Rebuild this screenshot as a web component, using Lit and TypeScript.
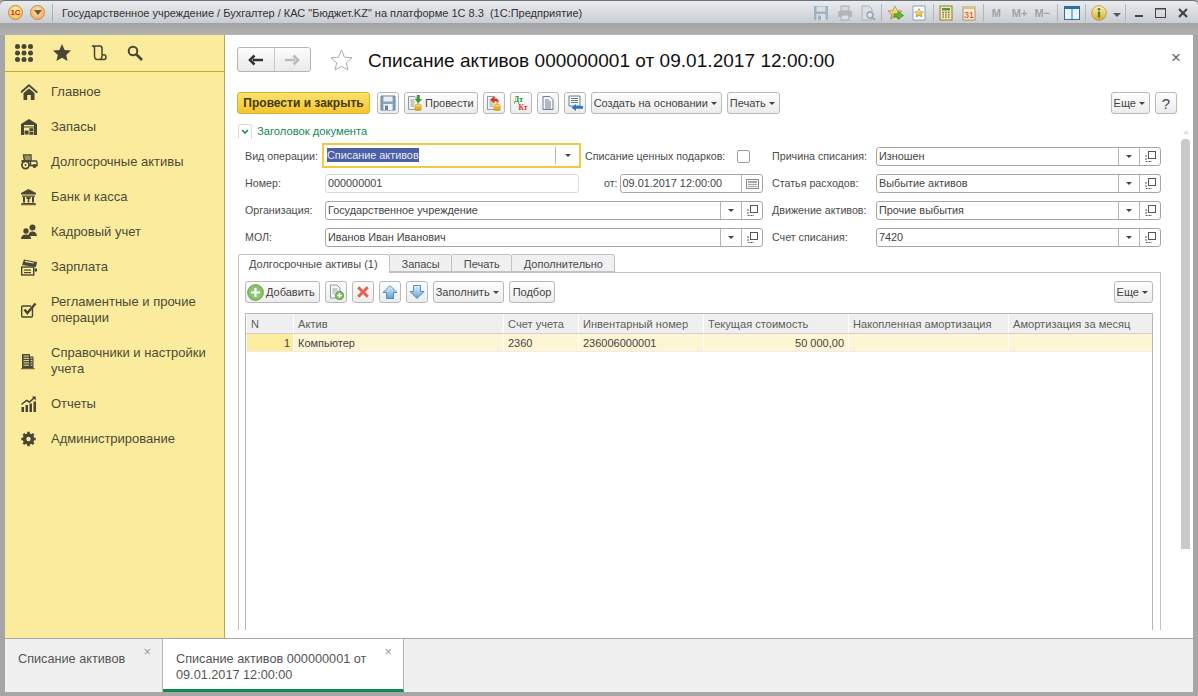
import { LitElement, html, css, svg } from 'lit';
import { customElement } from 'lit/decorators.js';

const DK = '#4a4635';

const ic = (w: number, h: number, body: unknown) => html`<svg width=${w} height=${h} viewBox="0 0 ${w} ${h}">${body}</svg>`;

const navIcons: Record<string, unknown> = {
  home: svg`<path d="M8 0 L17 8 L15.6 9.2 L8 2.6 L0.4 9.2 L-1 8Z" fill="${DK}"/><path d="M2.5 9 L8 4.4 L13.5 9 V16 H9.8 V11 H6.2 V16 H2.5Z" fill="${DK}"/>`,
  store: svg`<path d="M0 5 L8 0 L16 5 V16 H0Z" fill="${DK}"/><rect x="3" y="6" width="10" height="1.4" fill="#fbec9d"/><rect x="3" y="8.5" width="10" height="7.5" fill="#fbec9d"/><rect x="3.6" y="11.5" width="4" height="4" fill="${DK}"/><rect x="8.4" y="9.2" width="4" height="3" fill="${DK}"/><rect x="8.4" y="12.8" width="4" height="3" fill="${DK}"/>`,
  tractor: svg`<path d="M2.5 1 H10 V7 H15 Q16 7 16 8.500 V11.500 H9.500 V7 H3.500Z" fill="none" stroke="${DK}" stroke-width="1.400"/><rect x="3" y="2" width="6" height="4.500" fill="${DK}" opacity=".55"/><rect x="0.500" y="6" width="9.500" height="2" fill="${DK}"/><circle cx="4.500" cy="11" r="3.600" fill="none" stroke="${DK}" stroke-width="1.800"/><circle cx="4.500" cy="11" r="1" fill="${DK}"/><circle cx="13.500" cy="12" r="2" fill="${DK}"/>`,
  bank: svg`<path d="M7.500 0 L15 4 V5.500 H0 V4Z" fill="${DK}"/><rect x="1" y="6.500" width="13" height="1.300" fill="${DK}"/><rect x="2" y="8" width="2" height="5.500" fill="${DK}"/><rect x="11" y="8" width="2" height="5.500" fill="${DK}"/><path d="M5.500 8 H9.500 V10 H8.300 V13.500 H6.700 V10 H5.500Z" fill="${DK}"/><rect x="0.500" y="14" width="14" height="1" fill="${DK}"/><rect x="0" y="15.200" width="15" height="1" fill="${DK}"/>`,
  people: svg`<circle cx="11.500" cy="3.500" r="3" fill="${DK}"/><path d="M7.500 12 Q7.500 7.500 11.500 7.500 T16 12Z" fill="${DK}"/><circle cx="5" cy="7" r="2.700" fill="${DK}"/><path d="M0 15 Q0 10.500 5 10.500 T10 15Z" fill="${DK}"/>`,
  pay: svg`<path d="M1 6 L3 0.500 L16 3 L15 8 L8 7Z" fill="${DK}"/><rect x="4" y="2.500" width="9" height="1.200" fill="#fbec9d" transform="rotate(10 8 3)"/><rect x="0.700" y="8" width="12" height="8" fill="none" stroke="${DK}" stroke-width="1.400"/><rect x="3" y="10.500" width="7" height="1.200" fill="${DK}"/><rect x="3" y="13" width="7" height="1.200" fill="${DK}"/><rect x="13.500" y="9.500" width="2.500" height="3" fill="${DK}"/>`,
  check: svg`<path d="M11.500 6 V14 Q11.500 15 10.500 15 H1.700 Q0.700 15 0.700 14 V5 Q0.700 4 1.700 4 H10" fill="none" stroke="${DK}" stroke-width="1.400"/><path d="M3.500 7.500 L6.300 11 L14.500 1.500" fill="none" stroke="${DK}" stroke-width="2.400"/>`,
  book: svg`<path d="M1 1 H9 V3.500 H12.500 V15 H1Z" fill="${DK}"/><path d="M2.500 3 H8 M2.500 5.300 H8 M2.500 7.600 H8 M2.500 9.900 H8 M2.500 12.200 H8 M9.500 5.300 H11.500 M9.500 7.600 H11.500 M9.500 9.900 H11.500 M9.500 12.200 H11.500" stroke="#fbec9d" stroke-width="0.900"/><rect x="0" y="15.200" width="13.500" height="1" fill="${DK}"/>`,
  chart: svg`<rect x="0.500" y="11" width="2.500" height="5" fill="${DK}"/><rect x="4.500" y="9" width="2.500" height="7" fill="${DK}"/><rect x="8.500" y="7.500" width="2.500" height="8.500" fill="${DK}"/><rect x="12.500" y="5.500" width="2.500" height="10.500" fill="${DK}"/><path d="M0.500 8.500 L5.500 4.500 L8.500 6 L13.500 1.500" fill="none" stroke="${DK}" stroke-width="1.600"/><path d="M10.800 0.500 H14.800 V4.500Z" fill="${DK}"/>`,
  gear: svg`<circle cx="7.500" cy="8" r="4.300" fill="none" stroke="${DK}" stroke-width="3"/><path d="M7.500 0.800 V15.200 M0.300 8 H14.700 M2.400 2.900 L12.600 13.100 M12.600 2.900 L2.400 13.100" stroke="${DK}" stroke-width="2.600"/><circle cx="7.500" cy="8" r="2.200" fill="#fbec9d"/>`,
};

const grad = svg`<defs>
  <linearGradient id="gold" x1="0" y1="0" x2="0" y2="1"><stop offset="0" stop-color="#fff3b8"/><stop offset="1" stop-color="#e0a92a"/></linearGradient>
  <linearGradient id="sky" x1="0" y1="0" x2="0" y2="1"><stop offset="0" stop-color="#e3f2fc"/><stop offset="1" stop-color="#5e9fd8"/></linearGradient>
</defs>`;

const coins = svg`<ellipse cx="11" cy="14.300" rx="3.700" ry="1.500" fill="#d69a1c"/><ellipse cx="11" cy="12.500" rx="3.700" ry="1.500" fill="#e6b22e"/><ellipse cx="11" cy="10.700" rx="3.700" ry="1.500" fill="#f6d45a" stroke="#c8921c" stroke-width=".5"/>`;
const doc = svg`<path d="M1.500 1.500 H8 L11 4.500 V14.500 H1.500Z" fill="#f6f3e6" stroke="#8d9aa8"/><path d="M3.500 5 H7 M3.500 7 H8 M3.500 9 H7 M3.500 11 H7" stroke="#7b8b9b" stroke-width=".8"/>`;

const toolIcons: Record<string, unknown> = {
  save: svg`<path d="M1 1 H15 V15 H1Z" fill="#8aa3b8" stroke="#6b8196"/><rect x="3.500" y="1.500" width="9" height="5" fill="#e9eef3"/><rect x="3.500" y="9" width="9" height="6" fill="#eef2f5"/><rect x="5" y="10.500" width="3" height="4.500" fill="#6a829a"/>`,
  post: svg`${doc}${coins}<path d="M9.800 0 H12.800 V4 H15 L11.300 8.200 L7.600 4 H9.800Z" fill="#3f9c35"/>`,
  unpost: svg`${doc}${coins}<path d="M13 7.500 Q13 3.500 8.500 3.500 V1 L4 4.800 L8.500 8.500 V6 Q11 6 13 7.500Z" fill="#d23a28"/>`,
  dtkt: svg`<text x="1" y="6.500" font-size="7.500" font-weight="700" font-family="Liberation Serif, serif" fill="#2b8a2b">Дт</text><text x="5.500" y="15" font-size="7.500" font-weight="700" font-family="Liberation Serif, serif" fill="#d33020">Кт</text>`,
  report: svg`<path d="M3 1.500 H10 L13 4.500 V14.500 H3Z" fill="#f3f7fb" stroke="#6b7f93"/><path d="M5 5 H9 M5 7 H11 M5 9 H11 M5 11 H11 M5 13 H11" stroke="#5a6e82" stroke-width=".9"/>`,
  struct: svg`<path d="M2 1 H13 V11 H2Z" fill="#f3f7fb" stroke="#6b7f93"/><path d="M4 3.500 H11 M4 5.500 H11 M4 7.500 H11" stroke="#5a6e82" stroke-width=".9"/><path d="M16 11 H9 V9 L4.500 12.500 L9 16 V13.800 H16Z" fill="#2b78bf"/>`,
  addDoc: svg`<path d="M2.500 1 H9 L12 4 V14 H2.500Z" fill="#f3f7fb" stroke="#8d9aa8"/><path d="M4.500 5 H9.500 M4.500 7 H9.500 M4.500 9 H7" stroke="#7b8b9b" stroke-width=".8"/><circle cx="11.500" cy="11.500" r="4.300" fill="#79b85a" stroke="#4f8f3a" stroke-width=".6"/><path d="M11.500 9 V14 M9 11.500 H14" stroke="#fff" stroke-width="1.500"/>`,
  del: svg`<path d="M3.200 3.200 L12.800 12.800 M12.800 3.200 L3.200 12.800" stroke="#e8614c" stroke-width="3"/>`,
  up: svg`${grad}<path d="M8 1.500 L15 8.500 H11.500 V14.500 H4.500 V8.500 H1Z" fill="url(#sky)" stroke="#3a78b0" stroke-width=".8"/>`,
  down: svg`${grad}<path d="M8 14.500 L15 7.500 H11.500 V1.500 H4.500 V7.500 H1Z" fill="url(#sky)" stroke="#3a78b0" stroke-width=".8"/>`,
};

// title bar strip: [left margin, item], margins come from the measured icon positions
const sep = html`<span class="tb-sep"></span>`;
const mem = (t: string) => html`<span class="mem">${t}</span>`;
const titleItems: [number, unknown][] = [
  [0, ic(16, 16, svg`<path d="M1 1 H15 V15 H1Z" fill="#9db3c4"/><rect x="3.500" y="1.500" width="9" height="5" fill="#d8e0e6"/><rect x="3.500" y="9" width="9" height="6" fill="#d8e0e6"/><rect x="5" y="10.500" width="3" height="4.500" fill="#9db3c4"/>`)],
  [8, ic(16, 16, svg`<rect x="4" y="1" width="8" height="5" fill="#d6d8da" stroke="#a8acb0"/><rect x="1" y="6" width="14" height="6" rx="1" fill="#b2b6ba"/><rect x="4" y="10" width="8" height="5" fill="#dcdee0" stroke="#a8acb0"/>`)],
  [7, ic(16, 16, svg`<path d="M2 1 H9 L12 4 V15 H2Z" fill="#d9dee2" stroke="#a9b2ba"/><circle cx="10" cy="10" r="3" fill="#dbe3ea" stroke="#95a3ae" stroke-width="1.300"/><path d="M12 12 L15 15" stroke="#95a3ae" stroke-width="1.500"/>`)],
  [5, sep],
  [6, ic(16, 16, svg`${grad}<path d="M7 1 L9 5.500 L14 6 L10.300 9.300 L11.300 14 L7 11.600 L2.700 14 L3.700 9.300 L0 6 L5 5.500Z" fill="url(#gold)" stroke="#9b8a3a" stroke-width=".7"/><path d="M6 9 H10 V6.500 L15.500 10.500 L10 14.500 V12 H6Z" fill="#5cb82e" stroke="#2f7d1a" stroke-width=".6"/>`)],
  [8, ic(14, 16, svg`${grad}<path d="M1 1 H13 V15 H1Z" fill="#fff" stroke="#8aa0b5"/><path d="M7 3.500 L8.500 6.500 L11.500 7 L9.300 9 L9.900 12 L7 10.500 L4.100 12 L4.700 9 L2.500 7 L5.500 6.500Z" fill="url(#gold)" stroke="#9b8a3a" stroke-width=".6"/>`)],
  [7, sep],
  [5, ic(14, 16, svg`<rect x="1" y="1" width="12" height="14" fill="#f3e7b0" stroke="#8c7f3c"/><rect x="3" y="3" width="8" height="2.500" fill="#4f9a44"/><path d="M3.500 7.500 H4.800 M6.300 7.500 H7.600 M9.100 7.500 H10.400 M3.500 9.800 H4.800 M6.300 9.800 H7.600 M9.100 9.800 H10.400 M3.500 12.100 H4.800 M6.300 12.100 H7.600 M9.100 12.100 H10.400" stroke="#5a5430" stroke-width="1.300"/>`)],
  [9, ic(14, 16, svg`<rect x="1" y="2" width="12" height="13" fill="#f7ecd0" stroke="#a79464"/><rect x="1" y="1" width="12" height="3" fill="#d9c28a"/><text x="7" y="13" text-anchor="middle" font-size="9" font-family="Liberation Sans, sans-serif" fill="#cf3a20">31</text>`)],
  [7, sep],
  [8, mem('M')],
  [11, mem('M+')],
  [7, mem('M−')],
  [7, sep],
  [6, ic(16, 14, svg`<rect x=".5" y=".5" width="15" height="13" fill="#eaf2fa" stroke="#2e6f9f"/><rect x="1" y="1" width="14" height="2" fill="#2e6f9f"/><path d="M8 2 V13" stroke="#2e6f9f"/>`)],
  [5, sep],
  [5, ic(16, 16, svg`${grad}<circle cx="8" cy="8" r="7.300" fill="url(#gold)" stroke="#b08a30" stroke-width=".7"/><circle cx="8" cy="4.300" r="1.300" fill="#3f8a2c"/><rect x="6.900" y="6.500" width="2.200" height="6" fill="#3f8a2c"/>`)],
  [6, html`<span class="tb-caret"></span>`],
  [4, sep],
  [9, ic(9, 12, svg`<rect x="0" y="8" width="8" height="2" fill="#444"/>`)],
  [11, ic(12, 12, svg`<rect x=".5" y="1.500" width="10" height="9" fill="none" stroke="#444"/><rect x=".5" y="1" width="10" height="1.500" fill="#444"/>`)],
  [11, ic(10, 10, svg`<path d="M1 1 L9 9 M9 1 L1 9" stroke="#444" stroke-width="2.200"/>`)],
];

const dropIcon = html`<span class="fbtn"><span class="tri"></span></span>`;
const openIcon = html`<span class="fbtn">${ic(11, 11, svg`<rect x="3.500" y=".5" width="7" height="7" fill="none" stroke="#555"/><path d="M1 4 V10.500 H7" fill="none" stroke="#555" stroke-dasharray="2 1"/>`)}</span>`;
const calIcon = html`<span class="fbtn">${ic(13, 10, svg`<rect x=".5" y=".5" width="12" height="9" fill="#f6f6f6" stroke="#8a8a8a"/><path d="M2 3 H11" stroke="#555"/><path d="M2.500 5.500 H11 M2.500 7.500 H11" stroke="#555" stroke-dasharray="1 1"/>`)}</span>`;

const navItems = [
  ['home', 'Главное'],
  ['store', 'Запасы'],
  ['tractor', 'Долгосрочные активы'],
  ['bank', 'Банк и касса'],
  ['people', 'Кадровый учет'],
  ['pay', 'Зарплата'],
  ['check', 'Регламентные и прочие операции'],
  ['book', 'Справочники и настройки учета'],
  ['chart', 'Отчеты'],
  ['gear', 'Администрирование'],
];

const rightFields = [
  ['Причина списания:', 'Изношен'],
  ['Статья расходов:', 'Выбытие активов'],
  ['Движение активов:', 'Прочие выбытия'],
  ['Счет списания:', '7420'],
];

const columns = [
  ['N', 47], ['Актив', 210], ['Счет учета', 75], ['Инвентарный номер', 125],
  ['Текущая стоимость', 145], ['Накопленная амортизация', 160], ['Амортизация за месяц', 144],
] as [string, number][];

const rowCells = ['1', 'Компьютер', '2360', '236006000001', '50 000,00', '', ''];

@customElement('app-root')
export class AppRoot extends LitElement {
  private _field(value: string, ...buttons: unknown[]) {
    return html`<div class="field"><span class="fval">${value}</span>${buttons}</div>`;
  }

  private _tool(name: string, label = '') {
    return html`<button class="btn tool ${label ? '' : 'square'}">${ic(16, 16, toolIcons[name])}${label}</button>`;
  }

  private _menu(label: string) {
    return html`<button class="btn menu">${label}<span class="tri"></span></button>`;
  }

  render() {
    return html`
      <div class="titlebar">
        <span class="orb logo">1С</span>
        <span class="orb"><span class="orb-tri"></span></span>
        <span class="title-sep"></span>
        <span class="title-text">Государственное учреждение / Бухгалтер / КАС "Бюджет.KZ" на платформе 1С 8.3  (1С:Предприятие)</span>
        <div class="tb-icons">
          ${titleItems.map(([m, item]) => html`<span class="tb" style="margin-left:${m}px">${item}</span>`)}
        </div>
      </div>
      <div class="strip"></div>
      <div class="body">
        <aside class="side">
          <div class="side-top">
            ${ic(18, 18, svg`${[2.500, 9, 15.500].flatMap((y) => [2.500, 9, 15.500].map((x) => svg`<circle cx=${x} cy=${y} r="2.500" fill="${DK}"/>`))}`)}
            ${ic(18, 17, svg`<path d="M9 0 L11.600 6 L18 6.600 L13.200 10.900 L14.600 17 L9 13.800 L3.400 17 L4.800 10.900 L0 6.600 L6.400 6Z" fill="${DK}"/>`)}
            ${ic(16, 16, svg`<path d="M3.500 3 V1 H0.800 Q3.500 1 3.500 3 V11 Q3.500 14.500 6.500 14.500 H13 Q15 14.500 15 12 Q15 9.800 12.800 9.800 Q10.800 9.800 10.800 12 Q10.800 14.500 8.500 14.500 M3.500 1 H9 Q11 1 11 3.500 V9.800" fill="none" stroke="${DK}" stroke-width="1.500"/>`)}
            ${ic(16, 16, svg`<circle cx="6" cy="6" r="4.300" fill="none" stroke="${DK}" stroke-width="2"/><path d="M9.500 9.500 L15 15" stroke="${DK}" stroke-width="2.600"/>`)}
          </div>
          <nav class="nav">
            ${navItems.map(([icon, label]) => html`
              <div class="nav-item">
                <span class="nav-icon">${ic(17, 17, navIcons[icon])}</span>
                <span class="nav-label">${label}</span>
              </div>`)}
          </nav>
        </aside>
        <main class="content">
          <header class="head">
            <div class="navbtns">
              <span class="nb">${ic(16, 12, svg`<path d="M15 6 H5 M6.500 1.500 L2 6 L6.500 10.500" fill="none" stroke="#333" stroke-width="2.600"/>`)}</span>
              <span class="nb">${ic(16, 12, svg`<path d="M1 6 H11 M9.500 1.500 L14 6 L9.500 10.500" fill="none" stroke="#b9bcbf" stroke-width="2.600"/>`)}</span>
            </div>
            ${ic(23, 22, svg`<path d="M11.500 1 L14.500 8.200 L22 8.800 L16.300 13.800 L18 21 L11.500 17.200 L5 21 L6.700 13.800 L1 8.800 L8.500 8.200Z" fill="#fff" stroke="#a9adb2"/>`)}
            <h1 class="doc-title">Списание активов 000000001 от 09.01.2017 12:00:00</h1>
            <span class="close">×</span>
          </header>

          <div class="toolbar">
            <button class="btn primary">Провести и закрыть</button>
            ${this._tool('save')}
            ${this._tool('post', 'Провести')}
            ${this._tool('unpost')}
            ${this._tool('dtkt')}
            ${this._tool('report')}
            ${this._tool('struct')}
            ${this._menu('Создать на основании')}
            ${this._menu('Печать')}
            <span class="grow"></span>
            ${this._menu('Еще')}
            <button class="btn square help">?</button>
          </div>

          <div class="scroller">
            <div class="group-head">
              <span class="chev">${ic(8, 6, svg`<path d="M1 1 L4 4 L7 1" fill="none" stroke="#0e8a4f" stroke-width="1.500"/>`)}</span>
              <span>Заголовок документа</span>
            </div>

            <div class="form">
              <div class="fcol left">
                <div class="frow">
                  <label class="lbl">Вид операции:</label>
                  <div class="field focus"><span class="fval"><span class="sel">Списание активов</span></span><span class="vbar"></span><span class="fbtn bare"><span class="tri"></span></span></div>
                  <label class="lbl gift">Списание ценных подарков:</label>
                  <span class="checkbox"></span>
                </div>
                <div class="frow">
                  <label class="lbl">Номер:</label>
                  <div class="field number"><span class="fval">000000001</span></div>
                  <label class="lbl from">от:</label>
                  ${this._field('09.01.2017 12:00:00', calIcon)}
                </div>
                <div class="frow">
                  <label class="lbl">Организация:</label>
                  ${this._field('Государственное учреждение', dropIcon, openIcon)}
                </div>
                <div class="frow">
                  <label class="lbl">МОЛ:</label>
                  ${this._field('Иванов Иван Иванович', dropIcon, openIcon)}
                </div>
              </div>
              <div class="fcol right">
                ${rightFields.map(([label, value]) => html`
                  <div class="frow">
                    <label class="lbl">${label}</label>
                    ${this._field(value, dropIcon, openIcon)}
                  </div>`)}
              </div>
            </div>

            <div class="tabs">
              <span class="tab active">Долгосрочные активы (1)</span>
              <span class="tab">Запасы</span>
              <span class="tab">Печать</span>
              <span class="tab">Дополнительно</span>
            </div>
            <div class="panel">
              <div class="toolbar inner">
                <button class="btn add">${ic(17, 17, svg`<circle cx="8.500" cy="8.500" r="7.800" fill="#8cc46c" stroke="#5d9a48"/><path d="M8.500 4 V13 M4 8.500 H13" stroke="#fff" stroke-width="2.200"/>`)}Добавить</button>
                ${this._tool('addDoc')}
                ${this._tool('del')}
                ${this._tool('up')}
                ${this._tool('down')}
                ${this._menu('Заполнить')}
                <button class="btn">Подбор</button>
                <span class="grow"></span>
                ${this._menu('Еще')}
              </div>
              <div class="table">
                <div class="tr thead">
                  ${columns.map(([name, w]) => html`<span class="th" style="width:${w}px">${name}</span>`)}
                </div>
                <div class="tr tsel">
                  ${columns.map(([, w], i) => html`<span class="td ${i === 0 ? 'num' : ''} ${i === 4 ? 'money' : ''}" style="width:${w}px">${rowCells[i]}</span>`)}
                </div>
              </div>
            </div>
          </div>
          <div class="scrollbar"><span class="arrow"></span><span class="thumb"></span></div>
        </main>
      </div>
      <footer class="bottom">
        <div class="wtab first">
          <span>Списание активов</span><span class="x">×</span>
        </div>
        <div class="wtab current">
          <span>Списание активов 000000001 от 09.01.2017 12:00:00</span><span class="x">×</span>
        </div>
      </footer>
    `;
  }

  static styles = css`
    :host {
      display: flex;
      flex-direction: column;
      width: 1198px;
      height: 696px;
      overflow: hidden;
      background: #a6a6a6;
      font-family: "Liberation Sans", Arial, sans-serif;
      font-size: 11px;
      color: #4a4a4a;
    }
    button { font: inherit; color: inherit; }
    svg { display: block; flex: none; }

    .titlebar {
      height: 23px;
      flex: none;
      display: flex;
      align-items: center;
      padding: 1px 0 0 8px;
      box-sizing: border-box;
      background: linear-gradient(#e9ecef, #c9cdd1);
      border-top: 1px solid #6f7274;
      border-radius: 5px 5px 0 0;
    }
    .orb {
      width: 15px;
      height: 15px;
      border-radius: 50%;
      margin-right: 7px;
      background: radial-gradient(circle at 50% 35%, #fbe3b4, #e9a356);
      border: 1px solid #c78a42;
      box-sizing: border-box;
      display: flex;
      align-items: center;
      justify-content: center;
    }
    .logo {
      background: radial-gradient(circle at 50% 35%, #fff2a8, #f0b93a);
      color: #d4281c;
      font-size: 8px;
      font-weight: 700;
    }
    .orb-tri {
      border: 4px solid transparent;
      border-top: 5px solid #6d5a3c;
      border-bottom: 0;
    }
    .title-sep { width: 1px; height: 18px; background: #aeb1b4; margin-right: 9px; }
    .title-text { white-space: pre; color: #333; font-size: 11px; flex: 1; }
    .tb-icons { display: flex; align-items: center; padding-right: 10px; }
    .tb { display: flex; align-items: center; }
    .tb-sep { display: block; width: 1px; height: 18px; background: #b3b6b9; }
    .mem { color: #a3a3a3; font-weight: 700; font-size: 11px; }
    .tb-caret { display: block; border: 4px solid transparent; border-top: 4px solid #555; border-bottom: 0; margin-top: 4px; }

    .strip { height: 12px; flex: none; background: linear-gradient(#a2a2a2, #b2b2b2); }

    .body { flex: 1; min-height: 0; display: flex; margin: 0 5px; }
    .side {
      width: 219px;
      flex: none;
      background: #fbec9d;
      border-right: 1px solid #b9a85a;
      display: flex;
      flex-direction: column;
    }
    .side-top {
      height: 37px;
      flex: none;
      box-sizing: border-box;
      border-bottom: 1px solid #c6a935;
      display: flex;
      align-items: center;
      gap: 20px;
      padding: 0 0 1px 10px;
    }
    .nav { padding: 12px 0 0 16px; display: flex; flex-direction: column; gap: 19px; }
    .nav-item { display: flex; align-items: center; }
    .nav-icon { width: 30px; height: 16px; flex: none; }
    .nav-label {
      line-height: 16px;
      font-size: 13px;
      color: #4c4a38;
      width: 165px;
    }

    .content {
      position: relative;
      flex: 1;
      min-width: 0;
      background: #fff;
      display: flex;
      flex-direction: column;
      padding-left: 12px;
    }
    .head { display: flex; align-items: center; height: 25px; margin-top: 12px; flex: none; }
    .navbtns {
      display: flex;
      width: 74px;
      height: 25px;
      box-sizing: border-box;
      border: 1px solid #b5b5b5;
      border-radius: 3px;
      background: linear-gradient(#fdfdfd, #e9e9e9);
      margin-right: 19px;
    }
    .nb { flex: 1; display: flex; align-items: center; justify-content: center; }
    .nb + .nb { border-left: 1px solid #c8c8c8; }
    .doc-title {
      font-size: 19px;
      line-height: 25px;
      padding-top: 1px;
      font-weight: 400;
      color: #111;
      margin: 0 0 0 15px;
      letter-spacing: .04px;
      flex: 1;
    }
    .close { color: #666; font-size: 17px; margin: -4px 12px 0 0; }

    .toolbar { display: flex; align-items: center; gap: 5px; height: 22px; margin-top: 20px; padding-right: 16px; flex: none; }
    .grow { flex: 1; }
    .btn {
      height: 22px;
      box-sizing: border-box;
      padding: 0 3px;
      border: 1px solid #b9b9b9;
      border-radius: 3px;
      background: linear-gradient(#fdfdfd, #ececec);
      display: inline-flex;
      align-items: center;
      gap: 3px;
      white-space: nowrap;
      color: #444;
      font-size: 11px;
    }
    .tool { gap: 2px; padding: 0 3px 0 2px; }
    .menu { padding: 0 4px 0 2px; }
    .square { width: 22px; justify-content: center; padding: 0; }
    .primary {
      width: 133px;
      justify-content: center;
      font-size: 12px;
      font-weight: 700;
      color: #443a10;
      border-color: #d9b231;
      background: linear-gradient(#fde36f, #f4c42e);
      margin-right: 2px;
    }
    .help { font-size: 15px; }
    .tri {
      display: inline-block;
      border: 3px solid transparent;
      border-top: 3px solid #444;
      border-bottom: 0;
    }

    .scroller {
      flex: 1;
      min-height: 0;
      overflow: hidden;
      margin-top: 6px;
      margin-bottom: 8px;
    }
    .group-head {
      display: flex;
      align-items: flex-start;
      height: 23px;
      box-sizing: border-box;
      padding-top: 4px;
      line-height: 15px;
      color: #0f8a55;
      font-size: 11.200px;
      gap: 5px;
      margin-left: 1px;
    }
    .chev {
      width: 14px;
      height: 15px;
      box-sizing: border-box;
      border: 1px solid #dcdcdc;
      border-bottom: 0;
      border-radius: 3px 3px 0 0;
      display: flex;
      align-items: center;
      justify-content: center;
    }

    .form { display: flex; gap: 9px; margin-left: 8px; width: 916px; }
    .fcol { display: flex; flex-direction: column; }
    .left { width: 518px; flex: none; }
    .right { flex: 1; min-width: 0; }
    .frow { height: 27px; display: flex; align-items: center; }
    .lbl { white-space: nowrap; font-size: 10.700px; color: #4c4c4c; flex: none; margin-top: -1px; }
    .left .lbl:first-child { width: 80px; }
    .right .lbl:first-child { width: 104px; }
    .gift { margin-left: 4px; }
    .from { margin-left: 25px; margin-right: 2px; }
    .field {
      flex: 1;
      min-width: 0;
      height: 19px;
      box-sizing: border-box;
      border: 1px solid #a6a6a6;
      border-radius: 3px;
      display: flex;
      align-items: stretch;
      background: #fff;
    }
    .fval { flex: 1; min-width: 0; padding: 0 2px; line-height: 17px; white-space: nowrap; color: #444; font-size: 10.850px; }
    .fbtn {
      width: 20px;
      flex: none;
      border-left: 1px solid #b5b5b5;
      display: flex;
      align-items: center;
      justify-content: center;
    }
    .bare { border-left: 0; width: 23px; }
    .vbar { width: 1px; height: 17px; align-self: center; background: #b5b5b5; }
    .focus {
      flex: none;
      width: 259px;
      height: 25px;
      margin: -2px 0 0 -3px;
      border: 2px solid #f1cb3f;
      border-radius: 0;
    }
    .focus .fval { padding: 2px 3px 0; }
    .sel { background: #4c5ea6; color: #e8ebf5; padding: 1px 0; }
    .number { flex: none; width: 254px; border-color: #d9d9d9; }
    .checkbox {
      width: 13px;
      height: 13px;
      box-sizing: border-box;
      border: 1px solid #9d9d9d;
      border-radius: 2px;
      margin-left: 12px;
    }

    .tabs { display: flex; height: 19px; margin: 3px 0 0 1px; position: relative; z-index: 1; }
    .tab {
      box-sizing: border-box;
      padding: 0 11.500px;
      height: 18px;
      line-height: 18px;
      background: #f0f0f0;
      border: 1px solid #c2c2c2;
      border-left: 0;
      border-radius: 0 3px 0 0;
      font-size: 11px;
      white-space: nowrap;
    }
    .tab.active {
      height: 19px;
      width: 152px;
      padding: 0 10px;
      background: #fff;
      border-left: 1px solid #c2c2c2;
      border-bottom: 0;
      border-radius: 3px 3px 0 0;
    }
    .panel {
      margin: -1px 32px 0 1px;
      border: 1px solid #c2c2c2;
      border-bottom: 0;
      padding: 8px 7px 0 6px;
      height: 400px;
      box-sizing: border-box;
    }
    .inner { margin-top: 0; padding-right: 0; }
    .add { padding: 0 4px 0 1px; gap: 2px; }
    .table {
      margin-top: 10px;
      border: 1px solid #b5b5b5;
      border-bottom: 0;
      height: 400px;
    }
    .tr { display: flex; }
    .thead { height: 20px; box-sizing: border-box; background: #efefef; border-bottom: 1px solid #d0d0d0; }
    .th {
      box-sizing: border-box;
      padding: 0 4px;
      line-height: 20px;
      border-left: 1px solid #fff;
      white-space: nowrap;
      color: #5e5e5e;
      font-size: 11.100px;
      overflow: hidden;
    }
    .tsel { height: 18px; box-sizing: border-box; background: #fdf5d4; border-bottom: 1px solid #ececec; }
    .td {
      box-sizing: border-box;
      padding: 0 4px;
      line-height: 18px;
      border-left: 1px solid #fff;
      white-space: nowrap;
      color: #444;
      font-size: 11px;
    }
    .num { background: #fbeca0; text-align: right; padding-right: 3px; }
    .money { text-align: right; }

    .scrollbar {
      position: absolute;
      left: 956px;
      top: 95px;
      width: 9px;
      display: flex;
      flex-direction: column;
      align-items: center;
    }
    .arrow { border: 3px solid transparent; border-bottom: 4px solid #e0e0e0; border-top: 0; margin-bottom: 5px; }
    .thumb { width: 9px; height: 410px; background: #c9c9c9; border-radius: 4px 4px 0 0; }

    .bottom {
      height: 54px;
      flex: none;
      margin: 0 5px 4px;
      display: flex;
      background: #f0f0f0;
      border-top: 1px solid #a5a5a5;
      box-sizing: border-box;
    }
    .wtab {
      position: relative;
      box-sizing: border-box;
      font-size: 12.700px;
      line-height: 16px;
      color: #555;
      padding-top: 12px;
    }
    .first { width: 158px; padding-left: 13px; border-right: 1px solid #b5b5b5; }
    .current {
      width: 241px;
      background: #fff;
      padding: 12px 28px 0 13px;
      border-right: 1px solid #b5b5b5;
      border-bottom: 3px solid #0b8a4d;
    }
    .x { position: absolute; right: 11px; top: 6px; color: #999; font-size: 13px; line-height: 14px; }
  `;
}
